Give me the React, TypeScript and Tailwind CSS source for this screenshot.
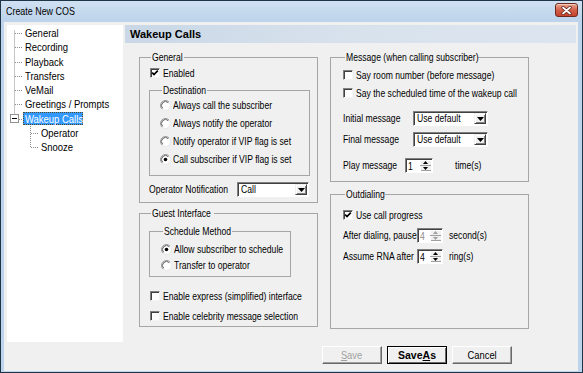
import React from "react";

const SANS = "[font-family:'Liberation_Sans',Arial,sans-serif]";

function T({ children, c }: { children: React.ReactNode; c?: string }) {
  return (
    <span className={"inline-block origin-left whitespace-nowrap [transform:scaleX(0.82)] " + (c || "")}>{children}</span>
  );
}

function Check({ checked }: { checked?: boolean }) {
  return (
    <span className="flex h-[10px] w-[10px] shrink-0 items-center justify-center border border-t-[#808080] border-l-[#808080] border-r-[#f4f4f4] border-b-[#f4f4f4] bg-white shadow-[inset_1px_1px_0_#404040]">
      {checked && (
        <svg width="8" height="8" viewBox="0 0 8 8">
          <path d="M1.2 3.6 L3 5.6 L6.8 1.6" fill="none" stroke="#000" strokeWidth="1.7" />
        </svg>
      )}
    </span>
  );
}

function Radio({ checked }: { checked?: boolean }) {
  return (
    <svg width="11" height="11" viewBox="0 0 11 11" className="shrink-0">
      <circle cx="5.5" cy="5.5" r="5" fill="#fff" />
      <path d="M1.96 9.04 A5 5 0 0 1 9.04 1.96" stroke="#9a9a9a" fill="none" />
      <path d="M9.04 1.96 A5 5 0 0 1 1.96 9.04" stroke="#e6e6e6" fill="none" />
      <path d="M2.67 8.33 A4 4 0 0 1 8.33 2.67" stroke="#5a5a5a" fill="none" />
      {checked && <circle cx="5.5" cy="5.5" r="1.8" fill="#000" />}
    </svg>
  );
}

function CheckRow({ label, checked, cls }: { label: string; checked?: boolean; cls?: string }) {
  return (
    <div className={"flex h-[14px] min-w-0 items-center gap-[3px] " + (cls || "")}>
      <Check checked={checked} />
      <T>{label}</T>
    </div>
  );
}

function RadioRow({ label, checked, cls }: { label: string; checked?: boolean; cls?: string }) {
  return (
    <div className={"flex h-[14px] min-w-0 items-center gap-[2px] " + (cls || "")}>
      <Radio checked={checked} />
      <T>{label}</T>
    </div>
  );
}

function Select({ value, cls }: { value: string; cls: string }) {
  return (
    <div className={"flex h-[15px] shrink-0 items-center border border-t-[#808080] border-l-[#808080] border-r-[#ffffff] border-b-[#ffffff] bg-white shadow-[inset_1px_1px_0_#404040] " + cls}>
      <span className="min-w-0 flex-1 overflow-hidden pl-[3px] leading-[13px]">
        <T>{value}</T>
      </span>
      <span className="mr-px flex h-[11px] w-[12px] shrink-0 items-center justify-center border border-t-[#f0f0f0] border-l-[#f0f0f0] border-r-[#404040] border-b-[#404040] bg-[#f0f0f0] shadow-[inset_1px_1px_0_#ffffff,inset_-1px_-1px_0_#808080]">
        <svg width="7" height="4" viewBox="0 0 7 4">
          <path d="M0 0H7L3.5 4Z" fill="#000" />
        </svg>
      </span>
    </div>
  );
}

function Spin({ value, disabled, cls }: { value: string; disabled?: boolean; cls: string }) {
  const arrow = disabled ? "#a0a0a0" : "#000";
  return (
    <div className={"flex h-[15px] shrink-0 items-stretch border border-t-[#808080] border-l-[#808080] border-r-[#ffffff] border-b-[#ffffff] bg-white shadow-[inset_1px_1px_0_#404040] " + cls}>
      <span className={"min-w-0 flex-1 pl-[2px] pt-px leading-[12px] " + (disabled ? "text-[#8d8d8d]" : "")}>
        <T>{value}</T>
      </span>
      <span className="my-px mr-px flex w-[11px] flex-col">
        <span className="flex h-[6px] items-center justify-center border-b border-b-[#a0a0a0] bg-[#f0f0f0] shadow-[inset_1px_1px_0_#ffffff]">
          <svg width="5" height="3" viewBox="0 0 5 3">
            <path d="M0 3H5L2.5 0Z" fill={arrow} />
          </svg>
        </span>
        <span className="flex h-[6px] items-center justify-center bg-[#f0f0f0] shadow-[inset_1px_0_0_#ffffff,inset_0_-1px_0_#a0a0a0]">
          <svg width="5" height="3" viewBox="0 0 5 3">
            <path d="M0 0H5L2.5 3Z" fill={arrow} />
          </svg>
        </span>
      </span>
    </div>
  );
}

function Group({ title, lw, cls, children }: { title: string; lw: string; cls?: string; children?: React.ReactNode }) {
  return (
    <fieldset className={"min-w-0 border border-[#a6a6a6] " + (cls || "")}>
      <legend className={"ml-[2px] px-[1px] leading-[13px] " + lw}>
        <T>{title}</T>
      </legend>
      {children}
    </fieldset>
  );
}

function TT({ children }: { children: React.ReactNode }) {
  return <span className="inline-block origin-left whitespace-nowrap [transform:scaleX(0.86)]">{children}</span>;
}

function Tree() {
  const rows = [
    { t: "General", lvl: 0 },
    { t: "Recording", lvl: 0 },
    { t: "Playback", lvl: 0 },
    { t: "Transfers", lvl: 0 },
    { t: "VeMail", lvl: 0 },
    { t: "Greetings / Prompts", lvl: 0 },
    { t: "Wakeup Calls", lvl: 0, sel: true },
    { t: "Operator", lvl: 1 },
    { t: "Snooze", lvl: 1 },
  ];
  const c = (i: number) => Math.round(1 + 7.125 + i * 14.25) + 0.5;
  return (
    <div className={"relative mt-[3px] ml-[3px] h-[317px] w-[116px] shrink-0 bg-white pt-px text-[11px] text-black " + SANS}>
      <svg className="absolute left-0 top-0" width="116" height="140" viewBox="0 0 116 140">
        <g stroke="#8c8c8c" strokeDasharray="1 1" fill="none">
          <line x1="7.5" y1={c(0) - 3} x2="7.5" y2="89.5" />
          {[0, 1, 2, 3, 4, 5].map((i) => (
            <line key={i} x1="8" y1={c(i)} x2="16" y2={c(i)} />
          ))}
          <line x1="12" y1={c(6)} x2="16" y2={c(6)} />
          <line x1="23.5" y1="101" x2="23.5" y2={c(8)} />
          <line x1="24" y1={c(7)} x2="32" y2={c(7)} />
          <line x1="24" y1={c(8)} x2="32" y2={c(8)} />
        </g>
        <rect x="3.5" y="89.5" width="8" height="8" fill="#fff" stroke="#919191" />
        <line x1="5" y1="93.5" x2="10" y2="93.5" stroke="#000" />
      </svg>
      {rows.map((r) => (
        <div key={r.t} className={"relative flex h-[14.25px] items-center " + (r.lvl ? "pl-[32px]" : "pl-[16px]")}>
          {r.sel ? (
            <span className="flex h-[13px] w-[60px] items-center border border-dotted border-[#5a4a20] bg-[#3399ff] pl-px leading-[12px] text-white">
              <TT>{r.t}</TT>
            </span>
          ) : (
            <span className="pl-[2px] leading-[12px]">
              <TT>{r.t}</TT>
            </span>
          )}
        </div>
      ))}
    </div>
  );
}

function Btn({ children, def, cls }: { children: React.ReactNode; def?: boolean; cls?: string }) {
  return (
    <div
      className={
        "flex h-[18px] w-[60px] items-center justify-center bg-[#f0f0f0] " +
        (def
          ? "border border-black shadow-[inset_1px_1px_0_#ffffff,inset_-1px_-1px_0_#696969] "
          : "border border-t-[#ffffff] border-l-[#ffffff] border-r-[#696969] border-b-[#696969] shadow-[inset_-1px_-1px_0_#a0a0a0] ") +
        (cls || "")
      }
    >
      {children}
    </div>
  );
}

export default function App() {
  return (
    <div className={"h-[373px] w-[583px] bg-[#1d3546] p-px " + SANS}>
      <div className="flex h-full flex-col bg-[#bcd4ec]">
        <div className="flex h-[21px] shrink-0 items-center bg-gradient-to-b from-[#cfe0f1] to-[#bcd3eb] pl-[5px] pr-[4px]">
          <span className="inline-block origin-left whitespace-nowrap text-[11px] leading-[13px] text-black [transform:scaleX(0.81)]">
            Create New COS
          </span>
          <div className="mt-[2px] ml-auto flex h-[14px] w-[23px] items-center justify-center self-start rounded-[3px] border border-[#6e2a1d] bg-gradient-to-b from-[#e9a690] via-[#d26049] to-[#c4432c] shadow-[inset_0_1px_0_#f6c9b9]">
            <svg width="11" height="9" viewBox="0 0 11 9">
              <path d="M2 1.5 L9 7.5 M9 1.5 L2 7.5" stroke="#5a1a10" strokeWidth="3.2" strokeLinecap="round" />
              <path d="M2 1.5 L9 7.5 M9 1.5 L2 7.5" stroke="#ffffff" strokeWidth="1.8" strokeLinecap="round" />
            </svg>
          </div>
        </div>
        <div className="mb-px ml-[3px] mr-[4px] flex flex-1 bg-[#f0f0f0] text-[10.5px] leading-[13px] text-black">
          <Tree />
          <div className="mt-[3px] ml-[2px] flex w-[451px] flex-col">
            <div className="flex h-[18px] items-center bg-gradient-to-r from-[#c9d7e6] via-[#d8e2ed] to-[#dce5ef] pl-[5px] text-[11px] font-bold">
              Wakeup Calls
            </div>
            <div className="ml-[14px] flex gap-[12px]">
              {/* left column */}
              <div className="flex w-[179px] min-w-0 shrink-0 flex-col">
                <Group title="General" lw="w-[33px]" cls="mt-[8px] pl-[9px] pr-[7px] pb-[5px]">
                  <CheckRow label="Enabled" checked cls="mt-[2px] ml-px" />
                  <Group title="Destination" lw="w-[45px]" cls="mt-[4px] pl-[10px] pb-[9px]">
                    <div className="mt-px flex flex-col gap-[4px]">
                      <RadioRow label="Always call the subscriber" />
                      <RadioRow label="Always notify the operator" />
                      <RadioRow label="Notify operator if VIP flag is set" />
                      <RadioRow label="Call subscriber if VIP flag is set" checked />
                    </div>
                  </Group>
                  <div className="mt-[6px] flex h-[15px] items-center">
                    <span className="w-[88px] shrink-0">
                      <T>Operator Notification</T>
                    </span>
                    <Select value="Call" cls="w-[72px]" />
                  </div>
                </Group>
                <Group title="Guest Interface" lw="w-[63px]" cls="mt-[4px] pl-[9px] pr-[7px] pb-[3px]">
                  <Group title="Schedule Method" lw="w-[69px]" cls="mt-[5px] w-[142px] pl-[11px] pb-[4px]">
                    <div className="mt-[4px] flex flex-col gap-[2px]">
                      <RadioRow label="Allow subscriber to schedule" checked />
                      <RadioRow label="Transfer to operator" />
                    </div>
                  </Group>
                  <div className="mt-[12px] ml-px flex flex-col gap-[6px]">
                    <CheckRow label="Enable express (simplified) interface" />
                    <CheckRow label="Enable celebrity message selection" />
                  </div>
                </Group>
              </div>
              {/* right column */}
              <div className="flex w-[199px] min-w-0 shrink-0 flex-col">
                <Group title="Message (when calling subscriber)" lw="w-[133px]" cls="mt-[8px] pl-[12px] pb-[8px]">
                  <div className="mt-[4px] flex flex-col gap-[4px]">
                    <CheckRow label="Say room number (before message)" />
                    <CheckRow label="Say the scheduled time of the wakeup call" />
                  </div>
                  <div className="mt-[11px] flex h-[15px] items-center">
                    <span className="w-[70px] shrink-0">
                      <T>Initial message</T>
                    </span>
                    <Select value="Use default" cls="w-[75px]" />
                  </div>
                  <div className="mt-[6px] flex h-[15px] items-center">
                    <span className="w-[70px] shrink-0">
                      <T>Final message</T>
                    </span>
                    <Select value="Use default" cls="w-[75px]" />
                  </div>
                  <div className="mt-[11px] flex h-[15px] items-center">
                    <span className="w-[62px] shrink-0">
                      <T>Play message</T>
                    </span>
                    <Spin value="1" cls="w-[28px]" />
                    <span className="ml-[22px]">
                      <T>time(s)</T>
                    </span>
                  </div>
                </Group>
                <Group title="Outdialing" lw="w-[40px]" cls="mt-[6px] h-[141px] pl-[12px]">
                  <CheckRow label="Use call progress" checked cls="mt-[7px]" />
                  <div className="mt-[6px] flex h-[15px] items-center">
                    <span className="w-[74px] shrink-0">
                      <T>After dialing, pause</T>
                    </span>
                    <Spin value="4" disabled cls="w-[26px]" />
                    <span className="ml-[6px]">
                      <T>second(s)</T>
                    </span>
                  </div>
                  <div className="mt-[6px] flex h-[15px] items-center">
                    <span className="w-[74px] shrink-0">
                      <T>Assume RNA after</T>
                    </span>
                    <Spin value="4" cls="w-[26px]" />
                    <span className="ml-[6px]">
                      <T>ring(s)</T>
                    </span>
                  </div>
                </Group>
              </div>
            </div>
            <div className="mt-[17px] ml-[197px] flex gap-[5px] text-[11px]">
              <Btn>
                <span className="inline-block whitespace-nowrap text-[#a0a0a0] [transform:scaleX(0.85)]">
                  <u>S</u>ave
                </span>
              </Btn>
              <Btn def>
                <span className="text-[10.5px] font-bold">
                  Save<u>A</u>s
                </span>
              </Btn>
              <Btn>
                <span className="inline-block whitespace-nowrap [transform:scaleX(0.85)]">Cancel</span>
              </Btn>
            </div>
          </div>
        </div>
      </div>
    </div>
  );
}
